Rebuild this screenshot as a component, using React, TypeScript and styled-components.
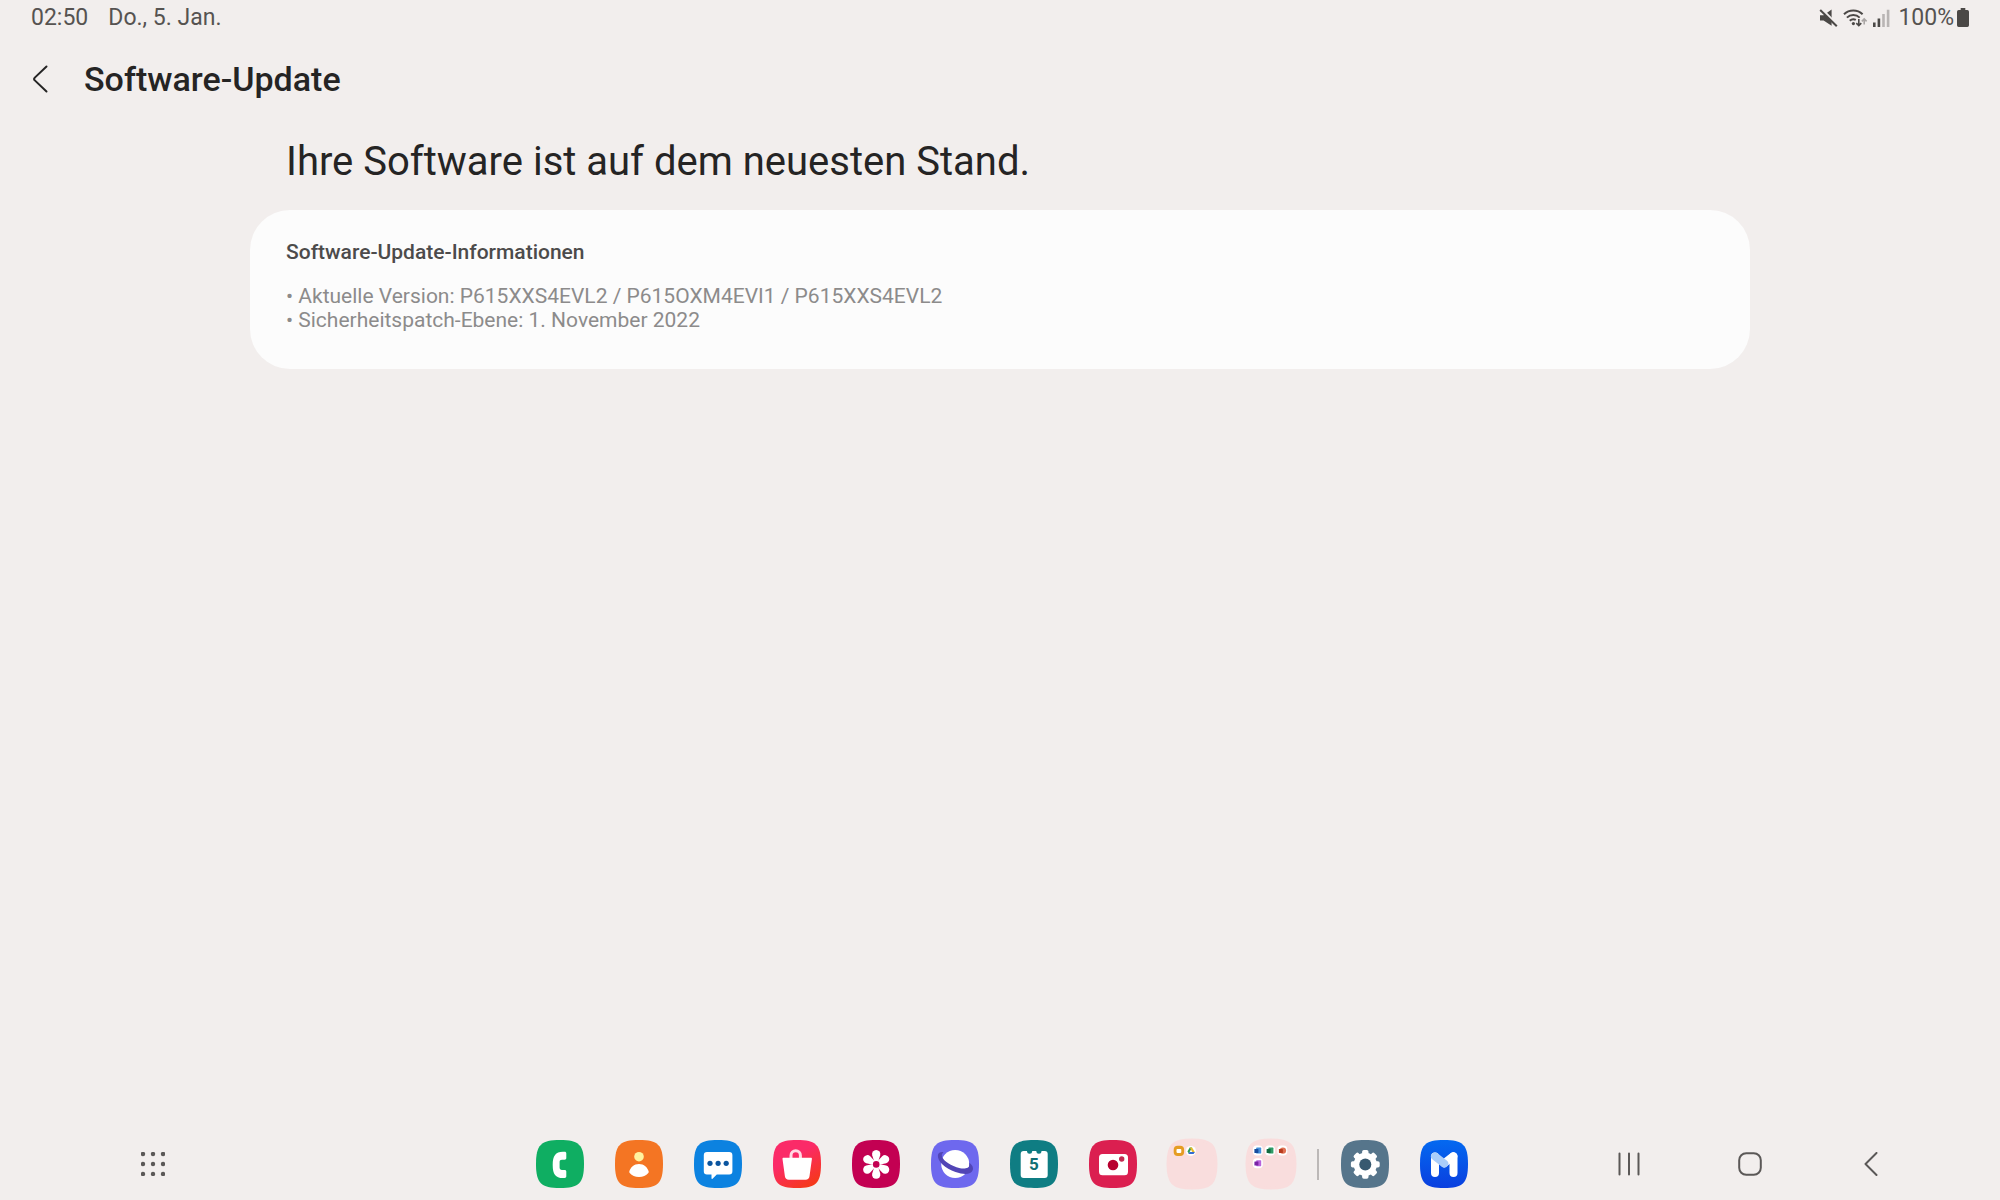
import React from "react";
import styled, { createGlobalStyle } from "styled-components";

const GlobalStyle = createGlobalStyle`
  *, *::before, *::after { box-sizing: border-box; }
  body {
    margin: 0;
    background: #f2eeed;
    color: #252424;
    font-family: Roboto, "Noto Sans", sans-serif;
  }
`;

const Screen = styled.div`
  display: flex;
  flex-direction: column;
  min-height: 100vh;
`;

const StatusBar = styled.div`
  display: flex;
  align-items: center;
  justify-content: space-between;
  padding: 0 31px;
  font-size: 23px;
  line-height: 35px;
  color: #565351;
`;

const StatusGroup = styled.div<{ $gap: number }>`
  display: flex;
  align-items: center;
  gap: ${(p) => p.$gap}px;
`;

const Charge = styled.span`
  display: flex;
  align-items: center;
  gap: 3px;
  margin-left: 3px;
`;

const Header = styled.header`
  display: flex;
  align-items: center;
  gap: 20px;
  height: 88px;
  padding: 0 16px;
`;

const IconButton = styled.button`
  display: grid;
  place-items: center;
  flex: none;
  width: 48px;
  height: 48px;
  padding: 0;
  border: 0;
  background: none;
  color: inherit;
  cursor: pointer;

  svg { display: block; }
`;

const Title = styled.h1`
  margin: 0;
  font-size: 34px;
  font-weight: 500;
  line-height: 40px;
`;

const Content = styled.main`
  flex: 1;
  width: 75%;
  margin: 0 auto;
  padding-top: 15px;
`;

const Headline = styled.h2`
  margin: 0 36px 24px;
  font-size: 40px;
  font-weight: 400;
  line-height: 48px;
`;

const Card = styled.section`
  padding: 30px 36px 37px;
  border-radius: 40px;
  background: #fcfcfc;
`;

const CardTitle = styled.h3`
  margin: 0 0 20px;
  font-size: 21px;
  font-weight: 500;
  line-height: 24px;
  color: #4c4b4b;
`;

const InfoList = styled.ul`
  margin: 0;
  padding: 0;
  list-style: none;
  font-size: 21px;
  line-height: 24px;
  color: #8c8b8b;
`;

const Taskbar = styled.footer`
  display: grid;
  grid-template-columns: 1fr auto 1fr;
  align-items: center;
  height: 72px;
  padding: 0 105px 0 109px;
  color: #5b5857;
`;

const Launcher = styled.div`
  padding-left: 20px;
`;

const Dock = styled.nav`
  display: flex;
  align-items: center;
  gap: 22px;
`;

const DockGroup = styled.div`
  display: flex;
  align-items: center;
  gap: 31px;
`;

const AppButton = styled(IconButton)`
  svg { overflow: visible; }
`;

const Divider = styled.span`
  width: 2px;
  height: 31px;
  background: #bcb8b7;
`;

const SystemNav = styled.nav`
  display: flex;
  justify-content: flex-end;
  gap: 73px;
`;

const SQUIRCLE = "M0 24C0 5 5 0 24 0S48 5 48 24 43 48 24 48 0 43 0 24Z";

function AppIcon({ label, fill, children }: { label: string; fill: string; children: React.ReactNode }) {
  return (
    <AppButton type="button" aria-label={label}>
      <svg width="48" height="48" viewBox="0 0 48 48">
        <path d={SQUIRCLE} fill={fill} />
        {children}
      </svg>
    </AppButton>
  );
}

function Folder({ label, children }: { label: string; children: React.ReactNode }) {
  return (
    <AppButton type="button" aria-label={label}>
      <svg width="48" height="48" viewBox="0 0 48 48">
        <path d={SQUIRCLE} fill="#f9dddd" stroke="#f9dddd" strokeWidth="3" />
        {children}
      </svg>
    </AppButton>
  );
}

function OfficeBadge({ x, y, dark, light, round }: { x: number; y: number; dark: string; light: string; round?: boolean }) {
  return (
    <g transform={`translate(${x} ${y})`}>
      <rect x="-5" y="-5" width="10" height="10" rx="4" fill="#fff" />
      {round ? (
        <circle cx="0.6" cy="0" r="3.2" fill={light} />
      ) : (
        <rect x="-1.6" y="-3" width="5" height="6" rx="0.6" fill={light} />
      )}
      <rect x="-3.4" y="-1.7" width="4" height="4" rx="0.5" fill={dark} />
    </g>
  );
}

function MuteIcon() {
  return (
    <svg width="19" height="18" viewBox="0 0 19 18">
      <path d="M1 6.2h3.6L12.6.6v16.2L4.6 11.6H1Z" fill="#4b4846" />
      <path d="M1.6-.6 19.4 17.2" stroke="#f2eeed" strokeWidth="3" />
      <path d="M1.2 1 17.8 17.2" stroke="#4b4846" strokeWidth="2" />
    </svg>
  );
}

function WifiIcon() {
  return (
    <svg width="25" height="19" viewBox="0 0 25 19">
      <g fill="none" stroke="#4b4846" strokeWidth="2">
        <path d="M1 6.2a13.4 13.4 0 0 1 18.6 0" />
        <path d="M3.9 9.6a9.2 9.2 0 0 1 12.8 0" />
        <path d="M6.8 12.8a5 5 0 0 1 6-.9" />
        <path d="M15.8 11v6.6M13.3 15.2l2.5 2.4 2.5-2.4" strokeWidth="1.6" />
      </g>
      <circle cx="10.4" cy="15.6" r="1.6" fill="#4b4846" />
      <path d="M21.2 16.6v-5.4M18.8 13.4l2.4-2.4 2.4 2.4" fill="none" stroke="#aaa6a5" strokeWidth="1.6" />
    </svg>
  );
}

function SignalIcon() {
  return (
    <svg width="17" height="18" viewBox="0 0 17 18">
      <path d="M0 13.5h2.6V18H0ZM4.6 9.5h2.6V18H4.6Z" fill="#4b4846" />
      <path d="M9.2 5h2.6v13H9.2ZM13.8.8h2.6V18h-2.6Z" fill="#b9b5b4" />
    </svg>
  );
}

function BatteryIcon() {
  return (
    <svg width="12" height="19" viewBox="0 0 13 19" preserveAspectRatio="none">
      <path d="M4 0h5v2h2.2A1.8 1.8 0 0 1 13 3.8v13.4a1.8 1.8 0 0 1-1.8 1.8H1.8A1.8 1.8 0 0 1 0 17.2V3.8A1.8 1.8 0 0 1 1.8 2H4Z" fill="#4b4846" />
    </svg>
  );
}

const GEAR_ANGLES = [0, 45, 90, 135];
const PETAL_ANGLES = [0, 60, 120, 180, 240, 300];
const DOTS = [2, 12, 22];

export default function App() {
  return (
    <Screen>
      <GlobalStyle />
      <StatusBar>
        <StatusGroup $gap={20}>
          <time>02:50</time>
          <span>Do., 5. Jan.</span>
        </StatusGroup>
        <StatusGroup $gap={5}>
          <MuteIcon />
          <WifiIcon />
          <SignalIcon />
          <Charge>
            100%
            <BatteryIcon />
          </Charge>
        </StatusGroup>
      </StatusBar>

      <Header>
        <IconButton type="button" aria-label="Zurück">
          <svg width="16" height="28" viewBox="0 0 16 28">
            <path d="M14.5 1.500 2.800 12.600a2 2 0 0 0 0 2.800L14.500 26.500" fill="none" stroke="#252424" strokeWidth="2" strokeLinecap="round" />
          </svg>
        </IconButton>
        <Title>Software-Update</Title>
      </Header>

      <Content>
        <Headline>Ihre Software ist auf dem neuesten Stand.</Headline>
        <Card>
          <CardTitle>Software-Update-Informationen</CardTitle>
          <InfoList>
            <li>• Aktuelle Version: P615XXS4EVL2 / P615OXM4EVI1 / P615XXS4EVL2</li>
            <li>• Sicherheitspatch-Ebene: 1. November 2022</li>
          </InfoList>
        </Card>
      </Content>

      <Taskbar>
        <Launcher>
          <IconButton type="button" aria-label="Alle Apps">
            <svg width="24" height="24" viewBox="0 0 24 24" fill="#5b5857">
              {DOTS.map((y) => DOTS.map((x) => <circle key={`${x}-${y}`} cx={x} cy={y} r="2.2" />))}
            </svg>
          </IconButton>
        </Launcher>

        <Dock aria-label="Apps">
          <DockGroup>
            <AppIcon label="Telefon" fill="#0fae62">
              <path d="M28.6 11.7c1.1 0 1.700.6 1.700 1.700v4.700c0 1.100-.6 1.700-1.700 1.700h-2.600c-1.600 0-2.400.8-2.400 2.300v5.500c0 1.500.8 2.300 2.400 2.300h2.600c1.100 0 1.700.6 1.700 1.700v4.700c0 1.100-.6 1.700-1.700 1.700h-1.800c-7.200 0-10.100-4-10.100-13.100s2.900-13.200 10.100-13.200Z" fill="#fff" />
            </AppIcon>
            <AppIcon label="Kontakte" fill="#f47523">
              <circle cx="24" cy="16.7" r="4.8" fill="#fff3a0" />
              <path d="M14.3 31.6C15.4 27.2 19 23.9 24 23.9s8.600 3.300 9.700 7.700c.1.500 0 .9-.4 1.300C31 35.500 28 36.900 24 36.900s-7-1.400-9.300-4c-.4-.4-.5-.8-.4-1.300Z" fill="#fff" />
            </AppIcon>
            <AppIcon label="Nachrichten" fill="#0c82e0">
              <path d="M13 12h22.2a3.200 3.200 0 0 1 3.200 3.200v16a3.200 3.200 0 0 1-3.200 3.200H22.800l-4.300 4.300c-.5.500-1 .3-1-.4v-3.900H13a3.200 3.200 0 0 1-3.200-3.200v-16A3.200 3.200 0 0 1 13 12Z" fill="#fff" />
              <g fill="#0b559f">
                <circle cx="16" cy="23.3" r="2.6" />
                <circle cx="24.1" cy="23.3" r="2.6" />
                <circle cx="32.2" cy="23.3" r="2.6" />
              </g>
            </AppIcon>
            <AppIcon label="Galaxy Store" fill="url(#store)">
              <defs>
                <linearGradient id="store" x1="0.2" y1="0" x2="0.8" y2="1">
                  <stop offset="0.35" stopColor="#fb2a68" />
                  <stop offset="1" stopColor="#f53914" />
                </linearGradient>
              </defs>
              <path d="M18 19v-3.600a4.700 4.700 0 0 1 9.400 0V19" fill="none" stroke="#ffd9e3" strokeWidth="3" />
              <path d="M10.600 17.700h27.200c.8 0 1.200.5 1.100 1.200l-2.400 17.400c-.3 2.200-1.700 3.500-3.900 3.500H15.800c-2.200 0-3.600-1.300-3.900-3.500L9.500 18.900c-.1-.7.300-1.200 1.100-1.200Z" fill="#fff" />
            </AppIcon>
            <AppIcon label="Galerie" fill="#c30052">
              <g fill="#fff" transform="translate(24.2 24.4)">
                {PETAL_ANGLES.map((a) => (
                  <path key={a} d="M-1.900-2.400-4-9.200a4.150 4.150 0 1 1 8 0L1.900-2.400Z" transform={`rotate(${a})`} />
                ))}
              </g>
              <circle cx="24.2" cy="24.4" r="3.3" fill="#c30052" />
            </AppIcon>
            <AppIcon label="Internet" fill="#6e68ee">
              <circle cx="24.2" cy="24" r="14" fill="#fff" />
              <path d="M12.500 12.100C9.300 11.800 7.300 12.800 6.900 15c-.9 6.200 7.400 13.300 17.600 17 8.600 3.100 15.700 2.700 17.300-1.900.8-2.500-.4-5-3.600-7.600.2.900.2 1.800 0 2.700.3 3.400-6 4.400-12.700 2.100C17.400 24.500 11 19.600 10.800 15.600c0-1.200.7-2.300 1.700-3.500Z" fill="#5145b6" />
            </AppIcon>
            <AppIcon label="Kalender" fill="#0f7d83">
              <rect x="10.7" y="11" width="27" height="27" rx="3" fill="#fff" />
              <circle cx="19.6" cy="11.2" r="2.5" fill="#0f7d83" />
              <circle cx="28.9" cy="11.2" r="2.5" fill="#0f7d83" />
              <text x="24" y="30" textAnchor="middle" fontFamily="Roboto, sans-serif" fontSize="17" fontWeight="700" fill="#0f6f75">5</text>
            </AppIcon>
            <AppIcon label="Kamera" fill="#db1f50">
              <rect x="10" y="14" width="29" height="21.3" rx="3.5" fill="#fff" />
              <circle cx="24" cy="25" r="5.3" fill="#b8002f" />
              <circle cx="32.7" cy="19" r="2.7" fill="#c22a50" />
            </AppIcon>
            <Folder label="Ordner Google">
              <rect x="5.7" y="5.7" width="10.4" height="10.4" rx="4" fill="#e59c22" />
              <rect x="8.5" y="9.1" width="4.8" height="3.8" rx="0.8" fill="#fff" />
              <circle cx="22.9" cy="10.9" r="5" fill="#fff" />
              <path d="M21.7 7.6h2.4l-3.300 6-1.300-2Z" fill="#2a9a55" />
              <path d="M21.7 7.600h2.400l2.800 4.600h-2.500Z" fill="#e8bb2b" />
              <path d="m26.900 12.100-1.300 2h-5.300l1.200-2Z" fill="#326bd0" />
            </Folder>
            <Folder label="Ordner Microsoft">
              <OfficeBadge x={10.8} y={10.6} dark="#174d9e" light="#4590db" />
              <OfficeBadge x={23} y={10.6} dark="#126a40" light="#2e9c67" />
              <OfficeBadge x={35.3} y={10.6} dark="#b83b1e" light="#e07254" round />
              <OfficeBadge x={10.8} y={23.2} dark="#7a23a6" light="#b863dc" />
            </Folder>
          </DockGroup>
          <Divider />
          <DockGroup>
            <AppIcon label="Einstellungen" fill="#56758b">
              <g transform="translate(24.3 24.4)">
                <circle r="11.6" fill="#fff" />
                {GEAR_ANGLES.map((a) => (
                  <rect key={a} x="-3.2" y="-14.4" width="6.4" height="28.8" rx="1.8" fill="#fff" transform={`rotate(${a})`} />
                ))}
                <circle r="6" fill="#375970" />
              </g>
            </AppIcon>
            <AppIcon label="Samsung Members" fill="url(#members)">
              <defs>
                <linearGradient id="members" x1="0" y1="0" x2="0" y2="1">
                  <stop offset="0" stopColor="#0469f0" />
                  <stop offset="1" stopColor="#0a3fdf" />
                </linearGradient>
              </defs>
              <g fill="none" strokeWidth="8" strokeLinecap="round">
                <path d="M15 16.500V33M33.500 16.500V33" stroke="#fff" />
                <path d="m24.300 23.200 9-7" stroke="#fff" />
                <path d="m15 16.400 9.300 7.200" stroke="#a9cdfa" />
              </g>
            </AppIcon>
          </DockGroup>
        </Dock>

        <SystemNav aria-label="Navigation">
          <IconButton type="button" aria-label="Letzte Apps">
            <svg width="24" height="24" viewBox="0 0 24 24">
              <path d="M2.500 1.500v21M12 1.500v21M21.500 1.500v21" stroke="#5b5857" strokeWidth="2" strokeLinecap="round" />
            </svg>
          </IconButton>
          <IconButton type="button" aria-label="Startseite">
            <svg width="24" height="24" viewBox="0 0 24 24">
              <rect x="1.2" y="1.2" width="21.6" height="21.6" rx="7" fill="none" stroke="#5b5857" strokeWidth="2" />
            </svg>
          </IconButton>
          <IconButton type="button" aria-label="Zurück">
            <svg width="14" height="24" viewBox="0 0 14 24">
              <path d="M12.500 1 1.500 12l11 11" fill="none" stroke="#5b5857" strokeWidth="2" strokeLinecap="round" strokeLinejoin="round" />
            </svg>
          </IconButton>
        </SystemNav>
      </Taskbar>
    </Screen>
  );
}
